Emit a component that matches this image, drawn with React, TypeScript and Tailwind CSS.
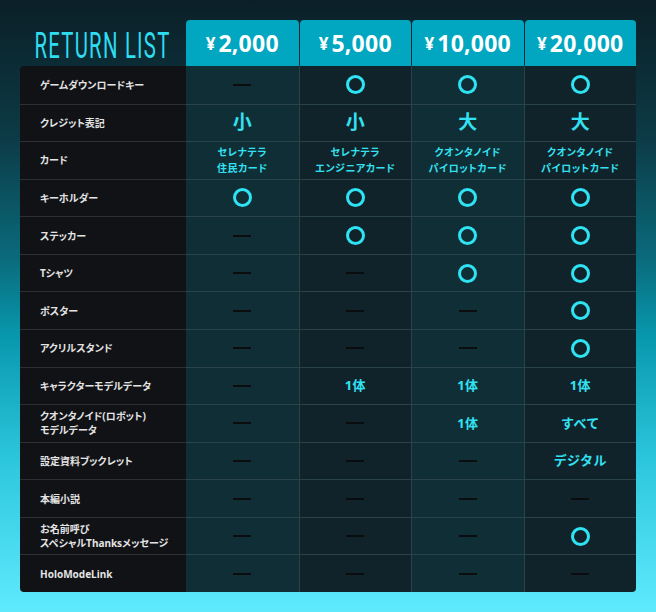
import React from "react";

type Cell =
  | { t: "dash" }
  | { t: "circle" }
  | { t: "big"; v: string }
  | { t: "text"; v: string[] }
  | { t: "mid"; v: string };

const D: Cell = { t: "dash" };
const O: Cell = { t: "circle" };

const rows: { label: string[]; cells: Cell[] }[] = [
  { label: ["ゲームダウンロードキー"], cells: [D, O, O, O] },
  {
    label: ["クレジット表記"],
    cells: [
      { t: "big", v: "小" },
      { t: "big", v: "小" },
      { t: "big", v: "大" },
      { t: "big", v: "大" },
    ],
  },
  {
    label: ["カード"],
    cells: [
      { t: "text", v: ["セレナテラ", "住民カード"] },
      { t: "text", v: ["セレナテラ", "エンジニアカード"] },
      { t: "text", v: ["クオンタノイド", "パイロットカード"] },
      { t: "text", v: ["クオンタノイド", "パイロットカード"] },
    ],
  },
  { label: ["キーホルダー"], cells: [O, O, O, O] },
  { label: ["ステッカー"], cells: [D, O, O, O] },
  { label: ["Tシャツ"], cells: [D, D, O, O] },
  { label: ["ポスター"], cells: [D, D, D, O] },
  { label: ["アクリルスタンド"], cells: [D, D, D, O] },
  {
    label: ["キャラクターモデルデータ"],
    cells: [D, { t: "mid", v: "1体" }, { t: "mid", v: "1体" }, { t: "mid", v: "1体" }],
  },
  {
    label: ["クオンタノイド(ロボット)", "モデルデータ"],
    cells: [D, D, { t: "mid", v: "1体" }, { t: "mid", v: "すべて" }],
  },
  { label: ["設定資料ブックレット"], cells: [D, D, D, { t: "mid", v: "デジタル" }] },
  { label: ["本編小説"], cells: [D, D, D, D] },
  { label: ["お名前呼び", "スペシャルThanksメッセージ"], cells: [D, D, D, O] },
  { label: ["HoloModeLink"], cells: [D, D, D, D] },
];

const prices = ["2,000", "5,000", "10,000", "20,000"];
const colBg = ["bg-[#0f2e36]", "bg-[#11232a]", "bg-[#0f2e36]", "bg-[#11232a]"];

const font = "font-['Noto_Sans','Noto_Sans_CJK_JP',sans-serif]";

function CellView({ c }: { c: Cell }) {
  if (c.t === "dash") return <div className="w-[18px] h-[2px] bg-[#0a0c0e]" />;
  if (c.t === "circle")
    return <div className="w-[19px] h-[19px] rounded-full border-[3px] border-[#2ee4f4]" />;
  if (c.t === "big")
    return <div className="text-[19px] font-bold text-[#33e2f2] leading-none">{c.v}</div>;
  if (c.t === "mid")
    return <div className="text-[13px] font-bold text-[#33e2f2] leading-none tracking-[0.02em]">{c.v}</div>;
  return (
    <div className="text-[10px] font-bold text-[#33e2f2] leading-[16px] text-center tracking-[0.06em] [font-feature-settings:'palt']">
      {c.v.map((l, i) => (
        <div key={i}>{l}</div>
      ))}
    </div>
  );
}

export default function App() {
  return (
    <div
      className={`w-[656px] h-[612px] px-[20px] pt-[20px] ${font} bg-[linear-gradient(to_bottom,#0b1f27_0%,#0c3a45_22%,#0a6a7b_42%,#0898ae_55%,#2cc6dc_75%,#5feafe_100%)]`}
    >
      <div className="grid grid-cols-[166px_1fr_1fr_1fr_1fr] h-[46px]">
        <div className="flex items-center justify-center">
          <div className="text-[37px] leading-none text-[#2fdcf0] font-['Roboto',sans-serif] font-normal tracking-[0.06em] scale-x-[0.55] whitespace-nowrap translate-y-[2px]">
            RETURN LIST
          </div>
        </div>
        {prices.map((p, i) => (
          <div
            key={i}
            className={`flex items-center justify-center bg-[#01a7c0] rounded-t-[4px] text-white font-bold ${i > 0 ? "ml-px" : ""}`}
          >
            <span className="text-[17px] mr-[3px] mt-[2px]">¥</span>
            <span className="text-[23px] tracking-[0.01em]">{p}</span>
          </div>
        ))}
      </div>
      <div className="grid grid-cols-[166px_1fr_1fr_1fr_1fr] grid-rows-[repeat(14,minmax(0,1fr))] h-[526px] rounded-[4px] overflow-hidden">
        {rows.map((r, ri) => (
          <React.Fragment key={ri}>
            <div
              className={`bg-[#111216] flex flex-col justify-center pl-[20px] text-[10px] font-bold text-[#e4e4e4] leading-[14px] [font-feature-settings:'palt'] ${ri > 0 ? "border-t border-[#2c3033]" : ""}`}
            >
              {r.label.map((l, i) => (
                <div key={i}>{l}</div>
              ))}
            </div>
            {r.cells.map((c, ci) => (
              <div
                key={ci}
                className={`${colBg[ci]} flex items-center justify-center ${ri > 0 ? "border-t border-[#2a4349]" : ""} ${ci > 0 ? "border-l border-[#2a4349]" : ""}`}
              >
                <CellView c={c} />
              </div>
            ))}
          </React.Fragment>
        ))}
      </div>
    </div>
  );
}
